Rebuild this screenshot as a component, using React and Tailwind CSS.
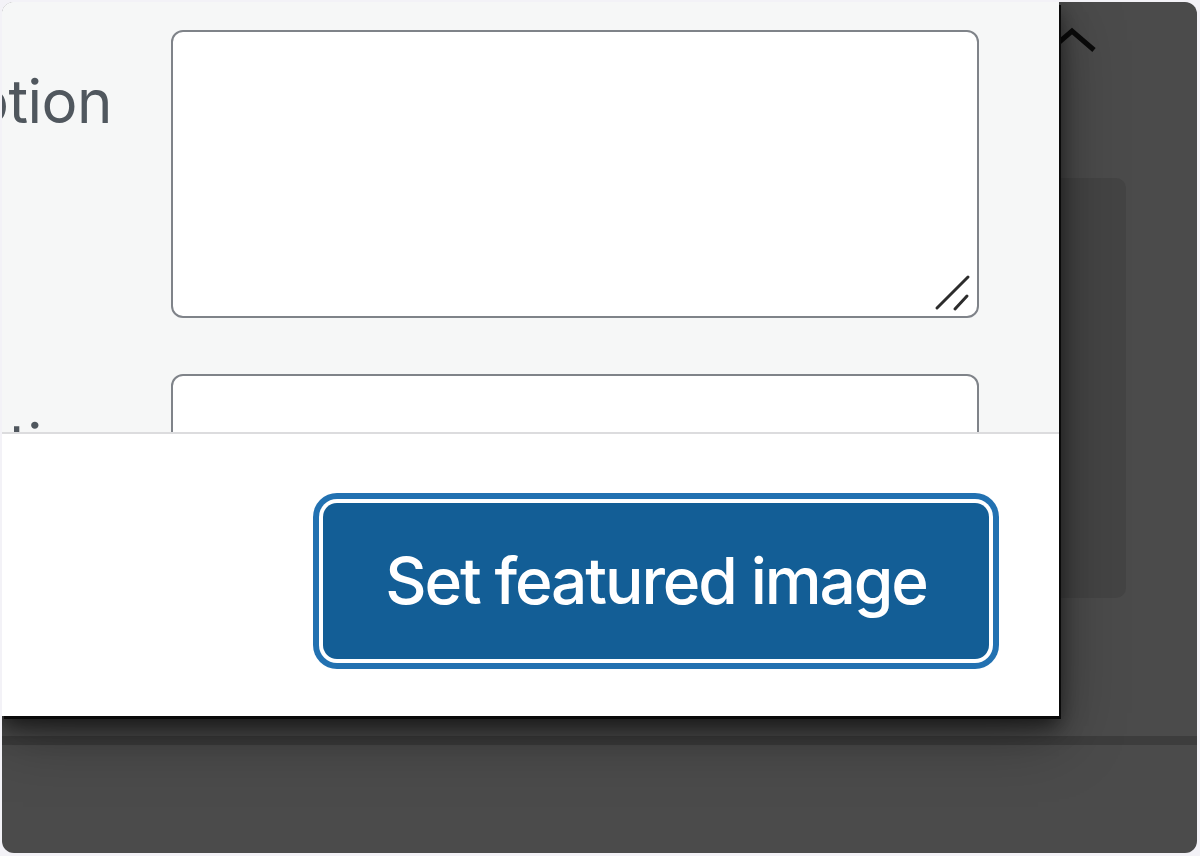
export default function App() {
    const sans = { fontFamily: 'Inter, "Noto Sans", "Liberation Sans", sans-serif' };

    return (
        <div className="w-[1200px] h-[856px] bg-[#f3f2f7] pl-[2px] pt-[2px] pr-[3px] pb-[3px]" style={sans}>
            <div className="relative h-full rounded-[12px] overflow-hidden bg-[#4b4b4b]">
                {/* things behind the overlay */}
                <div className="absolute left-[1040px] top-[176px] w-[84px] h-[420px] rounded-[10px] bg-[#444444]" />
                <div className="absolute left-0 right-0 top-[734px] h-[9px] bg-[#3d3d3d]" />
                <svg className="absolute left-[1042px] top-[22px]" width="56" height="32" viewBox="0 0 56 32" fill="none">
                    <polyline points="6,26 28,7 50,26" stroke="#0b0b0b" strokeWidth="5" strokeLinejoin="miter" />
                </svg>

                {/* modal */}
                <div className="relative z-10 w-[1057px] h-[714px] flex flex-col bg-white shadow-[2px_3px_0_#0a0a0a,0_10px_20px_rgba(0,0,0,0.6),0_18px_60px_rgba(0,0,0,0.35)]">
                    <div className="h-[430px] bg-[#f6f7f7] overflow-hidden pt-[28px] flex flex-col gap-[56px]">
                        <div className="flex">
                            <div className="w-[110px] shrink-0 flex justify-end pt-[41px]">
                                <span className="shrink-0 whitespace-nowrap text-[60px] leading-none text-[#50575e] tracking-[-0.5px]">Caption</span>
                            </div>
                            <div className="ml-[59px] relative w-[808px] h-[288px] bg-white border-[2.5px] border-[#7f8389] rounded-[12px]">
                                <svg className="absolute right-[6px] bottom-[4px]" width="38" height="38" viewBox="0 0 38 38" fill="none">
                                    <line x1="4" y1="34" x2="35" y2="3" stroke="#2c2c2c" strokeWidth="3" strokeLinecap="round" />
                                    <line x1="22" y1="35" x2="34" y2="22" stroke="#2c2c2c" strokeWidth="3" strokeLinecap="round" />
                                </svg>
                            </div>
                        </div>
                        <div className="flex">
                            <div className="w-[110px] shrink-0 flex justify-end pt-[41px]">
                                <span className="shrink-0 whitespace-nowrap text-[60px] leading-none text-[#50575e] tracking-[-0.5px]">Description</span>
                            </div>
                            <div className="ml-[59px] w-[808px] h-[120px] bg-white border-[2.5px] border-[#7f8389] rounded-[12px]" />
                        </div>
                    </div>
                    <div className="h-[2px] bg-[#dcdcde]" />
                    <div className="flex-1 flex justify-end items-start pt-[69px] pr-[70px]">
                        <button className="w-[666px] h-[156px] rounded-[14px] bg-[#135e96] text-white text-[64px] font-medium leading-none tracking-[-2.1px] shadow-[0_0_0_4px_#ffffff,0_0_0_10px_#2271b1]">
                            Set featured image
                        </button>
                    </div>
                </div>
            </div>
        </div>
    );
}
